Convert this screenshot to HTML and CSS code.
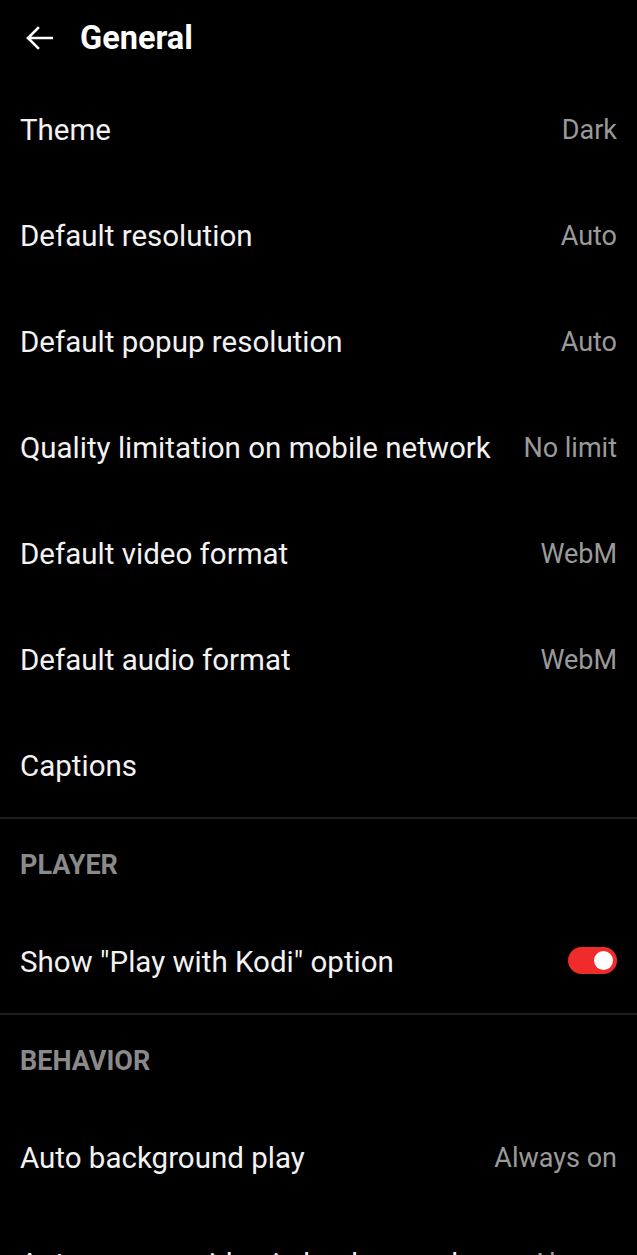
FILE: index.html
```html
<!DOCTYPE html>
<html>
<head>
<meta charset="utf-8">
<link rel="stylesheet" href="styles.css">
</head>
<body>
<div class="screen">
  <header class="toolbar">
    <svg class="back" width="28" height="24" viewBox="0 0 28 24"><path d="M27 12H3M13 2L3 12l10 10" fill="none" stroke="#fff" stroke-width="2.6" stroke-linecap="square"/></svg>
    <h1 class="title">General</h1>
  </header>
  <div class="row"><span class="label">Theme</span><span class="value">Dark</span></div>
  <div class="row"><span class="label">Default resolution</span><span class="value">Auto</span></div>
  <div class="row"><span class="label">Default popup resolution</span><span class="value">Auto</span></div>
  <div class="row"><span class="label">Quality limitation on mobile network</span><span class="value">No limit</span></div>
  <div class="row"><span class="label">Default video format</span><span class="value">WebM</span></div>
  <div class="row"><span class="label">Default audio format</span><span class="value">WebM</span></div>
  <div class="row"><span class="label">Captions</span></div>
  <div class="section">PLAYER</div>
  <div class="row"><span class="label">Show "Play with Kodi" option</span><span class="toggle"><span class="thumb"></span></span></div>
  <div class="section">BEHAVIOR</div>
  <div class="row"><span class="label">Auto background play</span><span class="value">Always on</span></div>
  <div class="row"><span class="label">Auto resume video in background</span><span class="value">Always</span></div>
</div>
</body>
</html>
```
FILE: styles.css
```css
html, body { margin: 0; padding: 0; background: #000; }
body { font-family: Roboto, "Noto Sans", sans-serif; color: #fff; }
.screen { width: 637px; height: 1255px; overflow: hidden; }
.toolbar { height: 75px; display: flex; align-items: center; padding-left: 25px; box-sizing: border-box; }
.back { display: block; margin-top: 1px; }
.title { margin: 0 0 0 27px; font-size: 32.5px; font-weight: 700; letter-spacing: 0; }
.row { height: 106px; display: flex; align-items: center; justify-content: space-between; padding: 3px 20px 0 20px; box-sizing: border-box; }
.label { font-size: 29.5px; color: #f2f2f2; }
.value { font-size: 27px; color: #9a9a9a; }
.section { height: 90px; border-top: 2px solid #1e1e1e; box-sizing: border-box; display: flex; align-items: center; padding: 3px 0 0 20px; font-size: 27px; font-weight: 700; color: #8a8a8a; }
.toggle { width: 49px; height: 27px; margin-top: -3px; border-radius: 14px; background: #ef2b2b; display: flex; align-items: center; justify-content: flex-end; padding-right: 4px; box-sizing: border-box; }
.thumb { width: 19px; height: 19px; border-radius: 50%; background: #fff; }
```
